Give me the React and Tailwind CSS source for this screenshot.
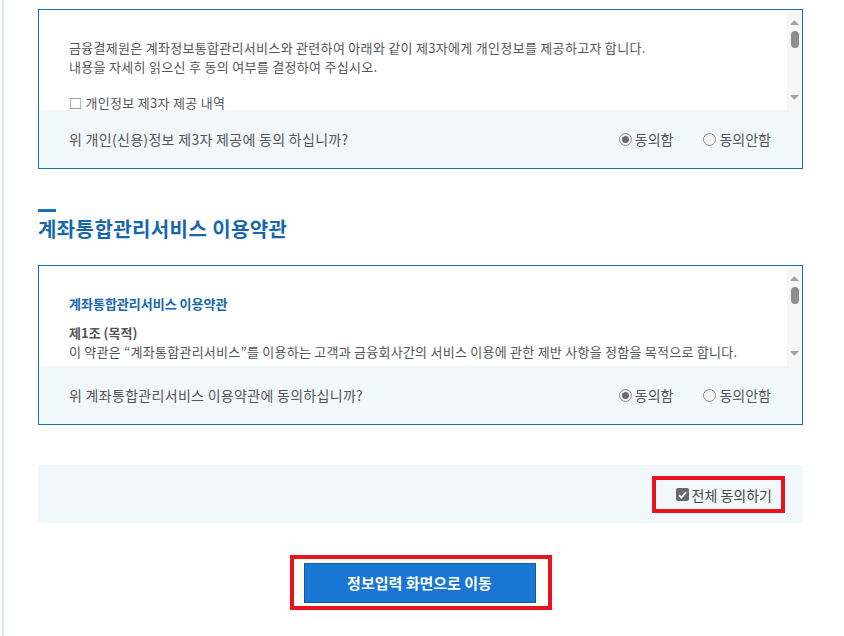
import React from 'react';

const FONT = { fontFamily: '"Noto Sans CJK KR", "Noto Sans", sans-serif' };

const FakeScrollbar = () => (
  <div className="w-[15px] shrink-0 bg-[#f7f7f7] flex flex-col items-center">
    <svg width="9" height="5" viewBox="0 0 9 5" className="mt-[10px]">
      <path d="M0 5 L4.5 0 L9 5 Z" fill="#a3a3a3" />
    </svg>
    <div className="mt-[6px] w-[8px] h-[17px] rounded-full bg-[#8c8c8c]" />
    <div className="flex-1" />
    <svg width="9" height="5" viewBox="0 0 9 5" className="mb-[10px]">
      <path d="M0 0 L9 0 L4.5 5 Z" fill="#a3a3a3" />
    </svg>
  </div>
);

const Radio = ({ checked, label }) => (
  <label className="flex items-center gap-[3px] text-[14px] leading-[20px] text-[#555]">
    <span className="w-[13px] h-[13px] rounded-full border border-[#888] bg-[#f4f4f4] flex items-center justify-center">
      {checked && <span className="w-[7px] h-[7px] rounded-full bg-[#6b6b6b]" />}
    </span>
    {label}
  </label>
);

const AgreeBox = ({ question, children }) => (
  <div className="border border-[#1b6fb7] bg-white">
    <div className="flex h-[100px]">
      <div className="flex-1 overflow-hidden pl-[30px] pt-[28px]">{children}</div>
      <FakeScrollbar />
    </div>
    <div className="h-[58px] bg-[#f1f8fc] flex items-center justify-between pl-[30px] pr-[31px]">
      <span className="text-[14px] text-[#555] tracking-[0.3px]">{question}</span>
      <div className="flex items-center gap-[30px]">
        <Radio checked label="동의함" />
        <Radio label="동의안함" />
      </div>
    </div>
  </div>
);

export default function App() {
  return (
    <div className="min-h-[636px] bg-white pl-[2px]" style={FONT}>
      <div className="min-h-[636px] border-l-2 border-[#dde6ef] pl-[34px] pt-[9px] pb-[26px] w-[801px]">
        <AgreeBox question="위 개인(신용)정보 제3자 제공에 동의 하십니까?">
          <div className="text-[13px] leading-[19px] text-[#555] tracking-[0.3px]">
            <p>금융결제원은 계좌정보통합관리서비스와 관련하여 아래와 같이 제3자에게 개인정보를 제공하고자 합니다.</p>
            <p>내용을 자세히 읽으신 후 동의 여부를 결정하여 주십시오.</p>
            <p className="mt-[17px]">□ 개인정보 제3자 제공 내역</p>
          </div>
        </AgreeBox>

        <div className="mt-[40px]">
          <div className="w-[18px] h-[3px] bg-[#1b6fb7]" />
          <h2 className="mt-[5px] text-[20px] leading-[24px] font-bold text-[#1767ad] tracking-[0.4px]">
            계좌통합관리서비스 이용약관
          </h2>
        </div>

        <div className="mt-[24px]">
          <AgreeBox question="위 계좌통합관리서비스 이용약관에 동의하십니까?">
            <div className="text-[13px] leading-[19px] text-[#555] tracking-[0.25px]">
              <p className="text-[13px] leading-[20px] font-bold text-[#1767ad] tracking-normal">계좌통합관리서비스 이용약관</p>
              <p className="mt-[9px] font-bold tracking-normal">제1조 (목적)</p>
              <p>이 약관은 “계좌통합관리서비스”를 이용하는 고객과 금융회사간의 서비스 이용에 관한 제반 사항을 정함을 목적으로 합니다.</p>
            </div>
          </AgreeBox>
        </div>

        <div className="mt-[40px] h-[58px] bg-[#f1f8fc] flex items-center justify-end pr-[18px]">
          <div className="border-4 border-[#e8141d] pl-[20px] pr-[9px] pt-[5px] pb-[4px]">
            <label className="flex items-center gap-[3px] text-[14px] leading-[20px] text-[#444]">
              <span className="w-[13px] h-[13px] rounded-[2px] bg-[#6a6a6a] flex items-center justify-center">
                <svg width="9" height="8" viewBox="0 0 9 8">
                  <path d="M1 4.2 L3.4 6.6 L8 1.2" stroke="#fff" strokeWidth="1.8" fill="none" />
                </svg>
              </span>
              전체 동의하기
            </label>
          </div>
        </div>

        <div className="mt-[32px] flex justify-center">
          <div className="border-4 border-[#e8141d] pl-[10px] pr-[12px] pt-[4px] pb-[3px]">
            <button className="w-[232px] h-[40px] bg-[#1976d2] border border-[#0e5aa5] text-white text-[15px] font-bold">
              정보입력 화면으로 이동
            </button>
          </div>
        </div>
      </div>
    </div>
  );
}
